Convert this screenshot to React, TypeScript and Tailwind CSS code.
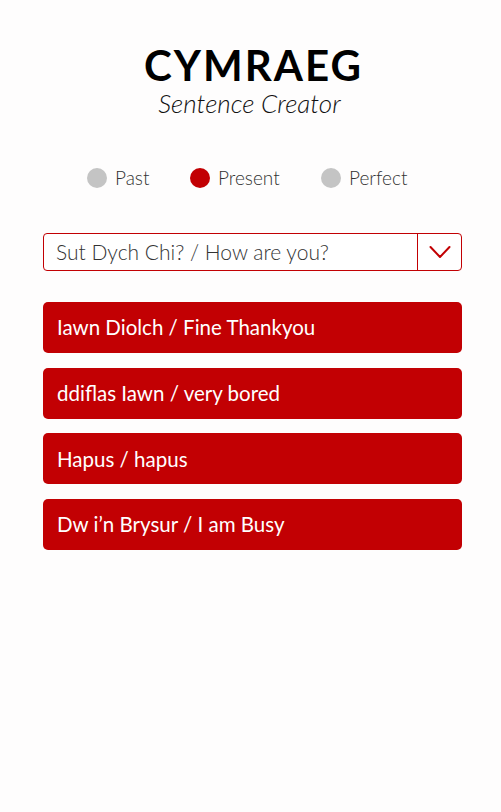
import { useState } from "react";

const tenses = [
  { label: "Past", width: "w-[103px]" },
  { label: "Present", width: "w-[131px]" },
  { label: "Perfect", width: "" },
];

const answers = [
  "Iawn Diolch / Fine Thankyou",
  "ddiflas Iawn / very bored",
  "Hapus / hapus",
  "Dw i’n Brysur / I am Busy",
];

export default function App() {
  const [tense, setTense] = useState("Present");

  return (
    <div className="min-h-[812px] w-full bg-[#fefdfd] font-['Lato','Noto_Sans',sans-serif] text-[#222]">
      <div className="pl-[43px] pr-[39px] pt-[41px]">
        {/* Header */}
        <div className="flex flex-col items-center">
          <h1 className="pl-[2px] text-[42px] font-bold leading-[48px] tracking-[2px] text-black">CYMRAEG</h1>
          <p className="mt-[0px] pr-[6px] text-[26px] font-light italic leading-[28px] text-[#111]">Sentence Creator</p>
        </div>

        {/* Tense radios */}
        <div className="mt-[49px] flex items-center pl-[44px]">
          {tenses.map((t) => (
            <button
              key={t.label}
              onClick={() => setTense(t.label)}
              className={`flex items-center gap-[8px] ${t.width}`}
            >
              <span
                className={`h-[20px] w-[20px] shrink-0 rounded-full ${tense === t.label ? "bg-[#c20003]" : "bg-[#c4c4c4]"}`}
              />
              <span className="text-[19px] font-light leading-[24px] text-[#333]">{t.label}</span>
            </button>
          ))}
        </div>

        {/* Question dropdown */}
        <div className="mt-[43px] flex h-[38px] items-stretch rounded-[4px] border border-[#c20003] bg-white">
          <div className="flex flex-1 items-center pl-[12px] text-[21px] font-light text-[#333]">
            Sut Dych Chi? / How are you?
          </div>
          <div className="flex w-[44px] items-center justify-center border-l border-[#c20003]">
            <svg width="22" height="14" viewBox="0 0 22 14" fill="none">
              <path d="M1.5 2 L11 12 L20.5 2" stroke="#c20003" strokeWidth="2" strokeLinecap="round" strokeLinejoin="round" />
            </svg>
          </div>
        </div>

        {/* Answers */}
        <div className="mt-[31px] flex flex-col gap-[14.7px]">
          {answers.map((a) => (
            <button
              key={a}
              className="flex h-[51px] items-center rounded-[5px] bg-[#c20003] pl-[14px] text-left text-[20.5px] text-white"
            >
              {a}
            </button>
          ))}
        </div>
      </div>
    </div>
  );
}
